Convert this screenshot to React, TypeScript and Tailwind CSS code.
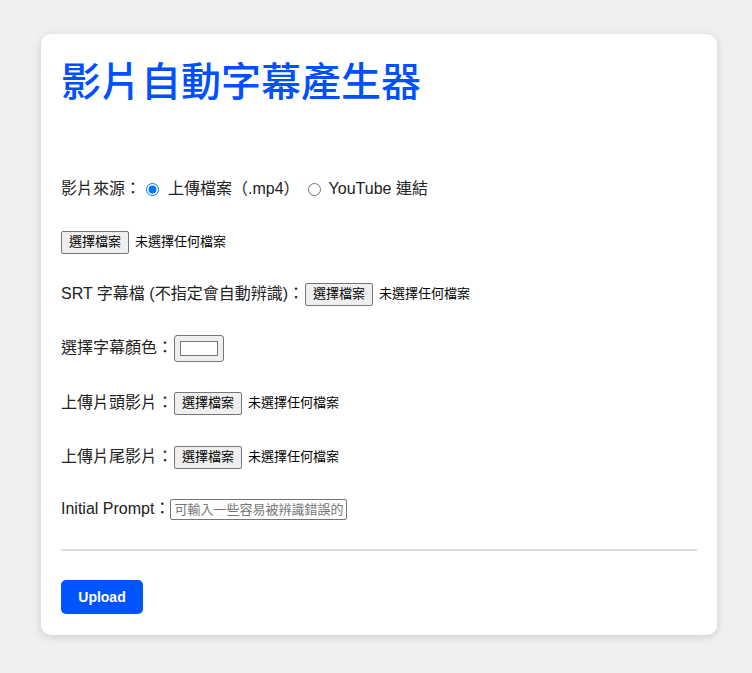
import { useState } from "react"

const font = { fontFamily: '"Liberation Sans", Arial, "Noto Sans CJK TC", sans-serif' }

function FilePicker() {
	return (
		<span className="inline-flex items-center">
			<span className="inline-flex h-[23px] items-center rounded-[2px] border border-[#767676] bg-[#efefef] px-[7px] text-[13px] text-black">
				選擇檔案
			</span>
			<span className="ml-[6px] text-[13px] text-black">未選擇任何檔案</span>
		</span>
	)
}

function ColorSwatch() {
	return (
		<span className="inline-flex h-[27px] w-[50px] items-center justify-center rounded-[3px] border border-[#767676] bg-[#efefef]">
			<span className="h-[15px] w-[38px] border border-[#777] bg-white" />
		</span>
	)
}

export default function App() {
	const [source, setSource] = useState("file")

	return (
		<div className="min-h-[673px] bg-[#f0f0f0] pl-[41px] pt-[34px]" style={font}>
			<div className="w-[676px] rounded-[10px] bg-white px-[20px] pb-[21px] pt-[20px] shadow-[0_2px_8px_rgba(0,0,0,0.15)]">
				<h1 className="text-[40px] font-medium leading-[56px] text-[#0050ff]">影片自動字幕產生器</h1>

				<div className="mt-[67px] flex h-[24px] items-center text-[16px] text-[#222]">
					<span>影片來源：</span>
					<input
						type="radio"
						className="ml-[5px] mr-[9px] h-[13px] w-[13px] accent-[#0075ff]"
						checked={source === "file"}
						onChange={() => setSource("file")}
					/>
					<span>上傳檔案（.mp4）</span>
					<input
						type="radio"
						className="ml-[8px] mr-[8px] h-[13px] w-[13px] accent-[#0075ff]"
						checked={source === "yt"}
						onChange={() => setSource("yt")}
					/>
					<span>YouTube 連結</span>
				</div>

				<div className="mt-[29px] flex h-[24px] items-center">
					<FilePicker />
				</div>

				<div className="mt-[28px] flex h-[24px] items-center text-[16px] text-[#222]">
					<span className="mr-[1px]">SRT 字幕檔 (不指定會自動辨識)：</span>
					<FilePicker />
				</div>

				<div className="mt-[30px] flex h-[24px] items-center text-[16px] text-[#222]">
					<span className="mr-[1px]">選擇字幕顏色：</span>
					<ColorSwatch />
				</div>

				<div className="mt-[31px] flex h-[24px] items-center text-[16px] text-[#222]">
					<span className="mr-[1px]">上傳片頭影片：</span>
					<FilePicker />
				</div>

				<div className="mt-[30px] flex h-[24px] items-center text-[16px] text-[#222]">
					<span className="mr-[1px]">上傳片尾影片：</span>
					<FilePicker />
				</div>

				<div className="mt-[28px] flex h-[24px] items-center text-[16px] text-[#222]">
					<span>Initial Prompt：</span>
					<input
						type="text"
						placeholder="可輸入一些容易被辨識錯誤的詞彙"
						className="h-[21px] w-[177px] rounded-[2px] border border-[#767676] px-[3px] text-[13px] placeholder:text-[#757575]"
					/>
				</div>

				<hr className="mt-[28px] border-t-2 border-[#ddd]" />

				<button
					type="button"
					className="mt-[29px] h-[34px] w-[82px] rounded-[5px] bg-[#0055ff] text-[14px] font-bold text-white"
				>
					Upload
				</button>
			</div>
		</div>
	)
}
